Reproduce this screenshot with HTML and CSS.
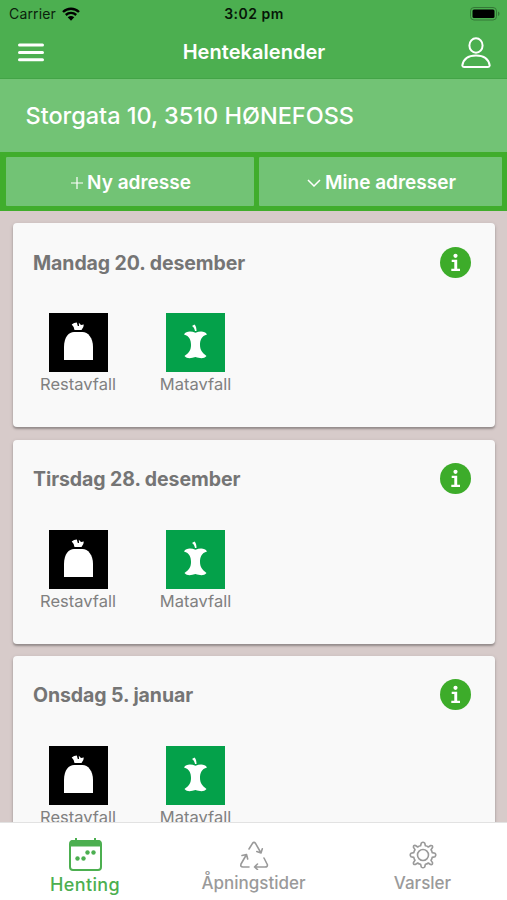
FILE: index.html
```html
<!DOCTYPE html>
<html lang="no">
<head>
    <meta charset="UTF-8">
    <meta name="viewport" content="width=device-width, initial-scale=1.0">
    <title>Hentekalender</title>
    <link rel="stylesheet" href="styles.css">
</head>
<body>
    <!-- Shared icons -->
    <svg class="sprite">
        <symbol id="icon-bag" viewBox="0 0 59 59">
            <path d="M15 47V34C15 24 20 19 25 19H33.500C39 19 44 25 44 34V47Z"/>
            <path d="M25.500 17Q25 13.500 22.700 11.500Q25 9.500 27.800 9.500L28.800 13H30L29.800 9.800L32 12L34.800 11.500Q35 14 32.500 17Z"/>
        </symbol>
        <symbol id="icon-apple" viewBox="0 0 59 59">
            <path d="M18 21.500C20 18 25 18 29.500 19.800C34 18 39 18 41 21.500C35.500 23 34 27 34 32C34 37 36.500 40 40.500 43C38 46 34 45.500 29.500 44C25 45.500 21 46 18.500 43C23 40 25 37 25 32C25 27 23.500 23 18 21.500Z"/>
            <path d="M26 13L28.500 11.500C30 13 30.500 15 30.500 18H29C28.500 15.500 28 14.500 26 13Z"/>
        </symbol>
        <symbol id="icon-info" viewBox="0 0 31 31">
            <circle class="info-disc" cx="15.500" cy="15.500" r="15.500"/>
            <circle cx="15.500" cy="8.800" r="2.100"/>
            <path d="M11.700 12.800H17.200V21.800H20V24H11.300V21.800H14.300V15H11.700Z"/>
        </symbol>
    </svg>

    <header class="header">
        <div class="status-bar">
            <div class="carrier">
                <span>Carrier</span>
                <svg class="wifi" viewBox="0 0 18 14">
                    <path d="M1 5C5.500 .6 12.500 .6 17 5M3.800 8C6.800 5.200 11.200 5.200 14.200 8"/>
                    <path class="wifi-dot" d="M5.700 10.300Q9 7.500 12.300 10.300L9 13.700Z"/>
                </svg>
            </div>
            <span class="time">3:02 pm</span>
            <svg class="battery" viewBox="0 0 30 14">
                <rect class="battery-case" x=".5" y=".5" width="26" height="12.500" rx="3.500"/>
                <rect x="2.500" y="2.500" width="22" height="8.500" rx="1.500"/>
                <path class="battery-tip" d="M28 4.500Q29.500 5 29.500 6.800T28 9Z"/>
            </svg>
        </div>
        <div class="title-bar">
            <svg class="menu" viewBox="0 0 26 19">
                <path d="M1.500 2H24.500M1.500 9.500H24.500M1.500 16.700H24.500"/>
            </svg>
            <h1>Hentekalender</h1>
            <svg class="user" viewBox="0 0 30 32">
                <ellipse cx="15" cy="8.500" rx="6.600" ry="7.200"/>
                <path d="M1.300 28.500C2.500 21.500 8 18.500 15 18.500S27.500 21.500 28.700 28.500Q28.600 30 27 30H3Q1.400 30 1.300 28.500Z"/>
            </svg>
        </div>
    </header>

    <div class="address">Storgata 10, 3510 HØNEFOSS</div>

    <div class="button-group">
        <button>
            <svg class="plus" viewBox="0 0 12 12"><path d="M6 0V12M0 6H12"/></svg>
            <span>Ny adresse</span>
        </button>
        <button>
            <svg class="chevron" viewBox="0 0 14 8"><path d="M1 1L7 7L13 1"/></svg>
            <span>Mine adresser</span>
        </button>
    </div>

    <main class="content">
        <section class="card">
            <div class="card-header">
                <h2>Mandag 20. desember</h2>
                <svg class="info"><use href="#icon-info"/></svg>
            </div>
            <div class="waste-list">
                <div class="waste rest"><svg><use href="#icon-bag"/></svg><span>Restavfall</span></div>
                <div class="waste mat"><svg><use href="#icon-apple"/></svg><span>Matavfall</span></div>
            </div>
        </section>
        <section class="card">
            <div class="card-header">
                <h2>Tirsdag 28. desember</h2>
                <svg class="info"><use href="#icon-info"/></svg>
            </div>
            <div class="waste-list">
                <div class="waste rest"><svg><use href="#icon-bag"/></svg><span>Restavfall</span></div>
                <div class="waste mat"><svg><use href="#icon-apple"/></svg><span>Matavfall</span></div>
            </div>
        </section>
        <section class="card">
            <div class="card-header">
                <h2>Onsdag 5. januar</h2>
                <svg class="info"><use href="#icon-info"/></svg>
            </div>
            <div class="waste-list">
                <div class="waste rest"><svg><use href="#icon-bag"/></svg><span>Restavfall</span></div>
                <div class="waste mat"><svg><use href="#icon-apple"/></svg><span>Matavfall</span></div>
            </div>
        </section>
    </main>

    <nav class="tabs">
        <div class="tab active">
            <svg class="tab-calendar" viewBox="0 0 33 33">
                <rect class="line" x="1" y="3" width="31" height="29" rx="3"/>
                <path d="M1 8.500V5Q1 2 4 2H6V0H8V2H25V0H27V2H29Q32 2 32 5V8.500Z"/>
                <circle cx="8.500" cy="20.500" r="2.200"/>
                <circle cx="14.500" cy="20.500" r="2.200"/>
                <circle cx="18.500" cy="14.500" r="2.200"/>
                <circle cx="24.500" cy="14.500" r="2.200"/>
            </svg>
            <span>Henting</span>
        </div>
        <div class="tab">
            <svg class="tab-recycle" viewBox="0 0 30 29">
                <path d="M10 8L13.500 2.300Q15 .5 16.500 2.300L22 12M17.800 10.500L22 12L23.300 7.800"/>
                <path d="M25 17L28.300 23.500Q29 26 26 26H15.500M18.500 23L15.500 26L18.500 28.500"/>
                <path d="M10 26H4Q1 26 2 23L7.500 13.500M3 14.500L7.500 13.500L8.700 18"/>
            </svg>
            <span>Åpningstider</span>
        </div>
        <div class="tab">
            <svg class="tab-gear" viewBox="0 0 28 28">
                <path d="M12.300 2Q14 .5 15.700 2L16.400 4.800Q18 5 19.300 6L21.700 4.500Q24 4.200 23.500 6.500L22 8.700Q23 10 23.200 11.600L26 12.300Q27.500 14 26 15.700L23.200 16.400Q23 18 22 19.300L23.500 21.700Q23.800 24 21.500 23.500L19.300 22Q18 23 16.400 23.200L15.700 26Q14 27.500 12.300 26L11.600 23.200Q10 23 8.700 22L6.300 23.500Q4 23.800 4.500 21.500L6 19.300Q5 18 4.800 16.400L2 15.700Q.5 14 2 12.300L4.800 11.600Q5 10 6 8.700L4.500 6.300Q4.200 4 6.500 4.500L8.700 6Q10 5 11.600 4.800Z"/>
                <circle cx="14" cy="14" r="5.500"/>
            </svg>
            <span>Varsler</span>
        </div>
    </nav>
</body>
</html>
```

FILE: styles.css
```css
* {
    box-sizing: border-box;
}
body {
    font-family: Inter, "Liberation Sans", sans-serif;
    margin: 0;
    height: 900px;
    display: flex;
    flex-direction: column;
    overflow: hidden;
    background: #d7cbca;
}
svg {
    display: block;
    flex: none;
}
span, h1, h2 {
    white-space: nowrap;
}
.sprite {
    display: none;
}
.header {
    height: 79px;
    flex: none;
    background: #4caf50;
    border-bottom: 1px solid #43a447;
}
.status-bar {
    height: 27px;
    display: grid;
    grid-template-columns: 1fr auto 1fr;
    align-items: center;
    padding: 0 8px 0 9px;
    font-size: 14px;
    color: #0b210c;
}
.carrier {
    display: flex;
    align-items: center;
    gap: 6px;
    letter-spacing: 0.15px;
}
.wifi {
    width: 18px;
    height: 14px;
    fill: none;
    stroke: #000;
    stroke-width: 2.4;
}
.wifi .wifi-dot {
    fill: #000;
    stroke: none;
}
.time {
    font-weight: 600;
    letter-spacing: 0.5px;
    color: #061607;
}
.battery {
    width: 30px;
    height: 14px;
    justify-self: end;
    margin-right: -1px;
}
.battery-case {
    fill: none;
    stroke: #347837;
}
.battery-tip {
    fill: #347837;
}
.title-bar {
    height: 51px;
    display: grid;
    grid-template-columns: 1fr auto 1fr;
    align-items: center;
    padding: 0 16px 0 18px;
    color: white;
}
.title-bar h1 {
    margin: 0 1px 2px 0;
    font-size: 20px;
    font-weight: 600;
    letter-spacing: 0.05px;
}
.menu {
    width: 26px;
    height: 19px;
    stroke: white;
    stroke-width: 3;
    stroke-linecap: round;
}
.user {
    width: 30px;
    height: 32px;
    justify-self: end;
    fill: none;
    stroke: white;
    stroke-width: 2;
}
.address {
    height: 73px;
    flex: none;
    padding-left: 25.500px;
    line-height: 74px;
    font-size: 23.500px;
    font-weight: 500;
    letter-spacing: -0.02px;
    color: white;
    background: #72c375;
}
.button-group {
    height: 59px;
    flex: none;
    display: grid;
    grid-template-columns: 248px 243px;
    gap: 5px;
    padding: 5px 5px 5px 6px;
    background: #40ad2c;
}
button {
    display: flex;
    align-items: center;
    justify-content: center;
    gap: 4px;
    padding: 2px 0 0 2px;
    border: none;
    border-radius: 1px;
    font-family: inherit;
    font-size: 19px;
    font-weight: 600;
    color: white;
    background: #72c375;
}
.plus, .chevron {
    fill: none;
    stroke: white;
    stroke-width: 1.5;
}
.plus {
    width: 12px;
    height: 12px;
    stroke-width: 1.2;
}
.chevron {
    width: 14px;
    height: 8px;
}
.content {
    flex: 1;
    min-height: 0;
    overflow: hidden;
    padding: 12.400px 12px 0 13px;
}
.card {
    height: 204px;
    margin-bottom: 12.200px;
    padding: 23px 24px 0 20px;
    border-radius: 4px;
    background: #f9f9f9;
    box-shadow: 0 2px 2px rgba(0,0,0,0.25), 0 1px 4px rgba(0,0,0,0.12);
}
.card-header {
    height: 32px;
    display: flex;
    align-items: center;
    justify-content: space-between;
}
.card-header h2 {
    margin: 1px 0 0;
    font-size: 19.500px;
    font-weight: 650;
    letter-spacing: -0.08px;
    color: #757575;
}
.info {
    width: 31px;
    height: 31px;
    fill: white;
}
.info-disc {
    fill: #3dac2a;
}
.waste-list {
    display: flex;
    padding-top: 35px;
}
.waste {
    width: 90px;
    margin-right: 27.500px;
    display: flex;
    flex-direction: column;
    align-items: center;
    font-size: 16.500px;
    line-height: 24px;
    color: #808080;
}
.waste svg {
    width: 59px;
    height: 59px;
    fill: white;
}
.rest svg {
    background: #000;
}
.mat svg {
    background: #04a14a;
}
.tabs {
    height: 78px;
    flex: none;
    display: grid;
    grid-template-columns: repeat(3, 1fr);
    background: white;
    border-top: 1px solid #e2e2e2;
}
.tab {
    display: flex;
    flex-direction: column;
    align-items: center;
    font-size: 17px;
    font-weight: 500;
    color: #9a9a9a;
}
.tab svg {
    fill: none;
    stroke: #9a9a9a;
    stroke-width: 1.6;
    stroke-linecap: round;
    stroke-linejoin: round;
}
.tab span {
    line-height: 22px;
}
.active {
    padding-left: 1px;
    font-size: 18px;
    letter-spacing: 0.4px;
    color: #4caf50;
}
.tab .tab-calendar {
    width: 33px;
    height: 33px;
    margin: 15px 0 3px;
    fill: #4caf50;
    stroke: none;
}
.tab .tab-calendar .line {
    fill: none;
    stroke: #4caf50;
    stroke-width: 2;
}
.tab-recycle {
    width: 30px;
    height: 29px;
    margin: 18px 0 2px;
}
.tab-gear {
    width: 28px;
    height: 28px;
    margin: 18px 0 3px;
}
```
